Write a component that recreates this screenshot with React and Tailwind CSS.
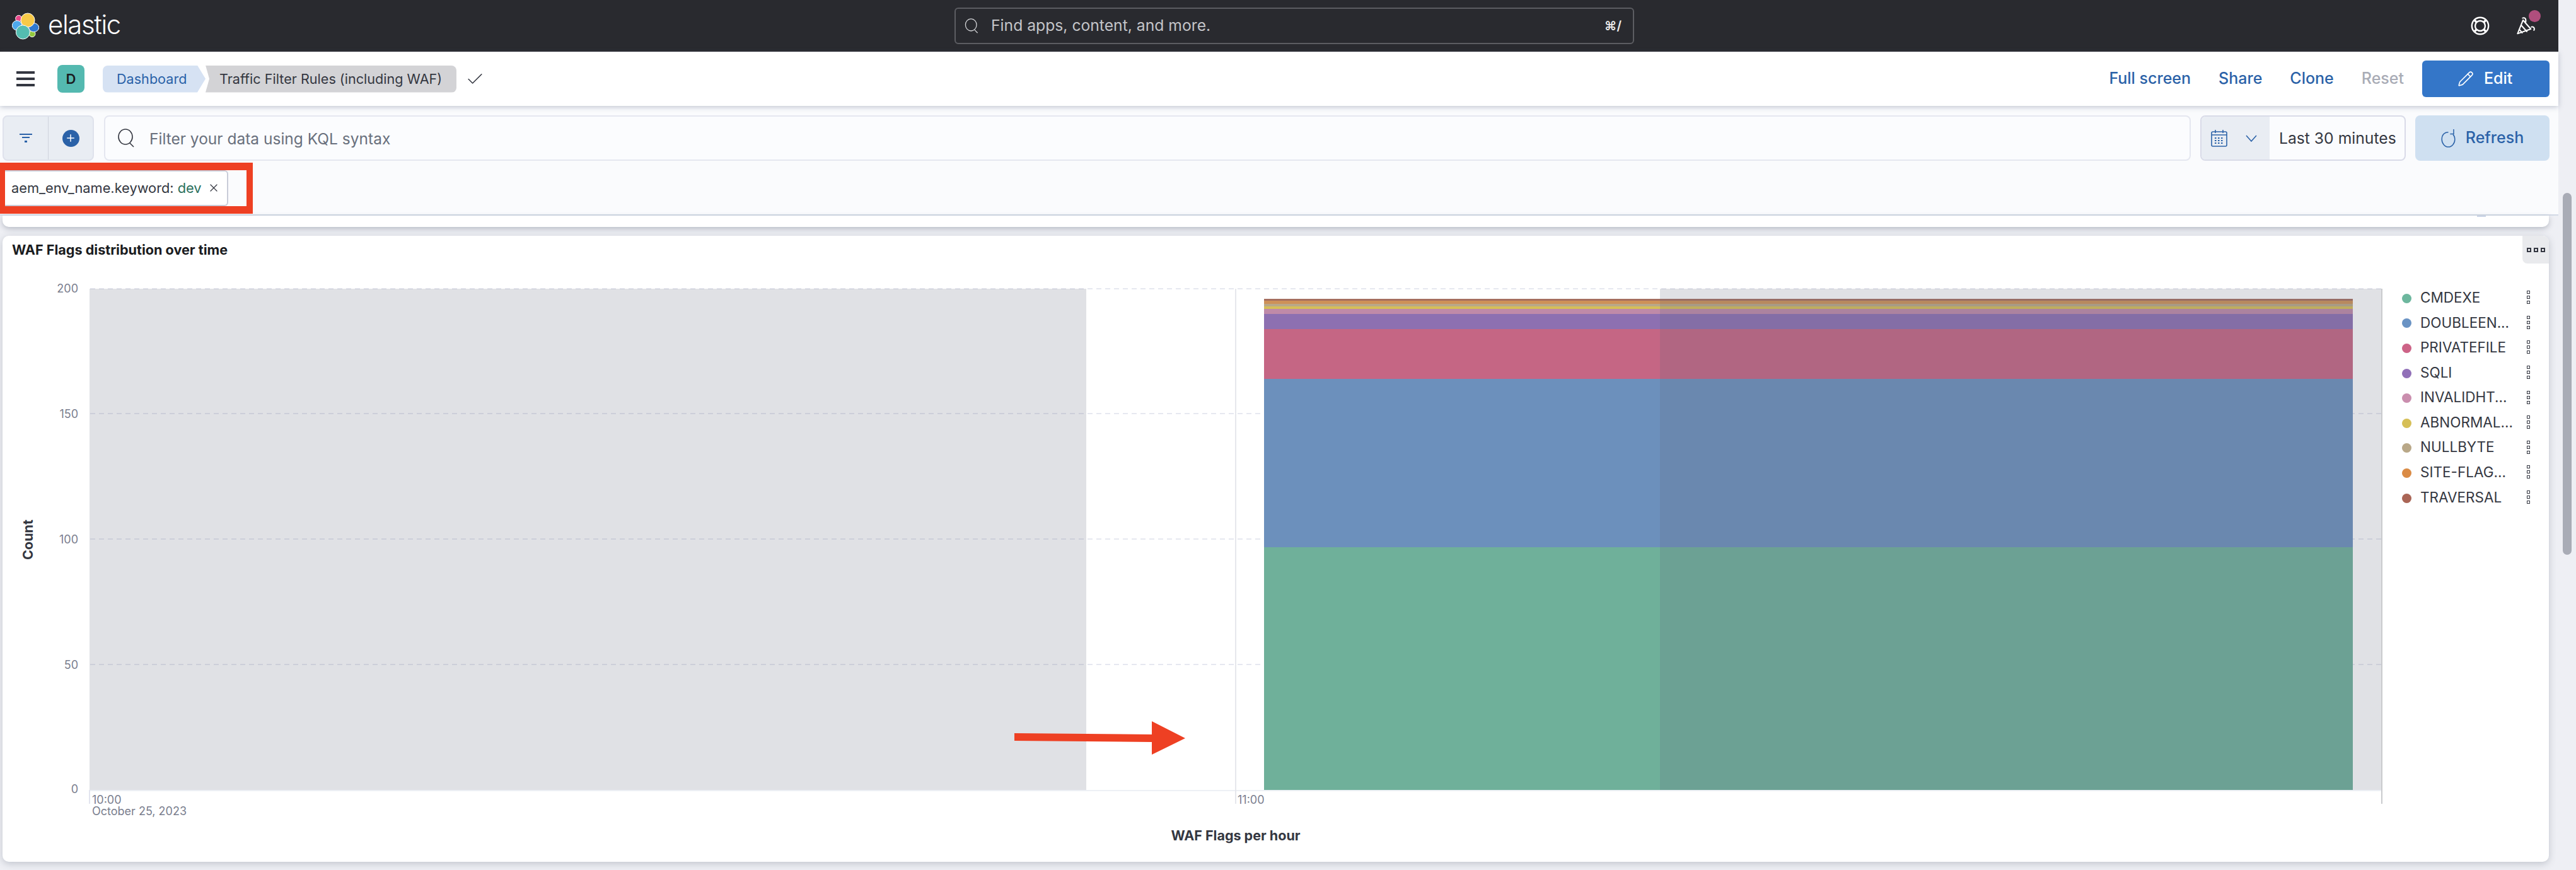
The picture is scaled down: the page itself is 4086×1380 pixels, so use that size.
import { Check, Pencil, Plus, X } from "lucide-react";

const BANDS = [
  { y: 474, h: 3, fill: "#a66f5f" },
  { y: 477, h: 5, fill: "#ce9158" },
  { y: 482, h: 4, fill: "#b9a888" },
  { y: 486, h: 4, fill: "#d6bf57" },
  { y: 490, h: 8, fill: "#bf8aa8" },
  { y: 498, h: 24, fill: "#8d70b1" },
  { y: 522, h: 79, fill: "#c56684" },
  { y: 601, h: 267, fill: "#6c90bc" },
  { y: 868, h: 385, fill: "#6fb09a" },
];

const LEGEND = [
  { label: "CMDEXE", color: "#6db79e" },
  { label: "DOUBLEEN...", color: "#6a93c4" },
  { label: "PRIVATEFILE", color: "#cd6387" },
  { label: "SQLI", color: "#9170b8" },
  { label: "INVALIDHT...", color: "#ca8eae" },
  { label: "ABNORMAL...", color: "#d6bf57" },
  { label: "NULLBYTE", color: "#b9a888" },
  { label: "SITE-FLAG...", color: "#da8b45" },
  { label: "TRAVERSAL", color: "#aa6556" },
];

function SearchGlyph({ className }) {
  return (
    <svg viewBox="0 0 28 30" fill="none" stroke="currentColor" strokeWidth="1.6" className={className}>
      <ellipse cx="13" cy="13" rx="11" ry="12" />
      <path d="M20 23l6 6" />
    </svg>
  );
}

function Logo() {
  return (
    <svg viewBox="0 0 129 127" className="w-[43px] h-[43px]" stroke="#fff" strokeWidth="3">
      <circle cx="32" cy="27" r="15" fill="#e8488b" />
      <circle cx="96" cy="100" r="15" fill="#93c83e" />
      <ellipse cx="24" cy="60" rx="23" ry="23" fill="#4ea9ec" />
      <ellipse cx="104" cy="70" rx="24" ry="21" fill="#2f78cf" />
      <circle cx="75" cy="35" r="33" fill="#f7c948" />
      <circle cx="52" cy="92" r="33" fill="#54bcb0" />
    </svg>
  );
}

function HelpRing() {
  return (
    <svg viewBox="0 0 30 30" className="w-[30px] h-[30px]" fill="none" stroke="#fff" strokeWidth="2.4">
      <circle cx="15" cy="15" r="13.2" />
      <circle cx="15" cy="15" r="8" />
      <path d="M5.7 5.7l3.6 3.6M24.3 5.7l-3.6 3.6M5.7 24.3l3.6-3.6M24.3 24.3l-3.6-3.6" strokeWidth="3.4" />
    </svg>
  );
}

function Cheer() {
  return (
    <svg viewBox="0 0 90 90" className="w-[30px] h-[30px]" fill="none" stroke="#fff" strokeWidth="6" strokeLinejoin="round" strokeLinecap="round">
      <path d="M4 82L30 18L67 60Z" />
      <path d="M21 42L48 72M12 62L26 78" />
      <path d="M28 8c12-4 18 4 14 22" />
      <path d="M70 50c12-2 16 6 12 16" />
    </svg>
  );
}

function Chart() {
  const grid = [458, 656, 855, 1054];
  return (
    <svg viewBox="4 418 3796 949" className="w-[3796px] h-[949px] shrink-0 block">
      {grid.map((y) => (
        <line key={y} x1="143" x2="3778" y1={y} y2={y} stroke="#e6e8f0" strokeWidth="2" strokeDasharray="8 6" />
      ))}
      {BANDS.map((b) => (
        <rect key={b.y} x="2005" y={b.y} width="1727" height={b.h} fill={b.fill} />
      ))}
      <rect x="142" y="458" width="1581" height="795" fill="#64697d" fillOpacity="0.2" />
      <rect x="2633" y="458" width="1145" height="795" fill="#64697d" fillOpacity="0.2" />
      <line x1="143" x2="3778" y1="1254" y2="1254" stroke="#edf0f5" strokeWidth="2" />
      <line x1="142" x2="142" y1="1253" y2="1275" stroke="#e3e5ef" strokeWidth="2" />
      <line x1="1960" x2="1960" y1="458" y2="1275" stroke="#e6e7ec" strokeWidth="2" />
      <line x1="3778" x2="3778" y1="458" y2="1275" stroke="#c9cacd" strokeWidth="2" />
      <g fill="#7a7e8e" fontSize="18" textAnchor="end">
        <text x="124" y="464">200</text>
        <text x="124" y="663">150</text>
        <text x="124" y="862">100</text>
        <text x="124" y="1061">50</text>
        <text x="124" y="1258">0</text>
      </g>
      <g fill="#7a7e8e" fontSize="18">
        <text x="146" y="1275">10:00</text>
        <text x="146" y="1293">October 25, 2023</text>
        <text x="1963" y="1275">11:00</text>
      </g>
      <text x="52" y="856" transform="rotate(-90 52 856)" textAnchor="middle" fill="#343741" fontSize="21.5" fontWeight="700">Count</text>
      <text x="1960" y="1333" textAnchor="middle" fill="#343741" fontSize="21.5" fontWeight="700">WAF Flags per hour</text>
    </svg>
  );
}

export default function App() {
  return (
    <div className="relative flex w-[4086px] h-[1380px] overflow-hidden bg-[#eeeff4] font-[Inter,sans-serif]">
      <div className="flex flex-col w-[4058px] shrink-0">
        {/* global header */}
        <div className="flex items-center justify-between h-[82px] bg-[#292a2f] text-white shrink-0">
          <div className="flex items-center w-[1514px] pl-[19px]">
            <Logo />
            <span className="ml-[14px] text-[42px] leading-none font-light tracking-[-1.4px] -mt-[4px]">elastic</span>
          </div>
          <div className="flex items-center w-[1078px] h-[58px] border-2 border-[#5c5d62] rounded-[6px] pl-[13px] pr-[18px]">
            <SearchGlyph className="w-[24px] h-[24px] text-[#d5d6d9]" />
            <span className="ml-[19px] text-[24.7px] text-[#c3c4c8]">Find apps, content, and more.</span>
            <span className="ml-auto text-[20px] font-semibold text-[#eceded]">⌘/</span>
          </div>
          <div className="flex items-center justify-end flex-1 pr-[36px] gap-[43px]">
            <HelpRing />
            <div className="relative">
              <Cheer />
              <span className="absolute -top-[10px] left-[19px] w-[19px] h-[19px] rounded-full bg-[#b04e7d]" />
            </div>
          </div>
        </div>

        {/* app menu bar */}
        <div className="relative z-10 flex items-center h-[86px] bg-white shrink-0 shadow-[0_2px_8px_rgba(90,100,130,0.35)] pl-[26px] pr-[14px]">
          <div className="flex flex-col gap-[6px] w-[29px]">
            <span className="h-[4px] bg-[#343741]" />
            <span className="h-[4px] bg-[#343741]" />
            <span className="h-[4px] bg-[#343741]" />
          </div>
          <div className="flex items-center justify-center ml-[36px] w-[43px] h-[44px] rounded-[8px] bg-[#54b9b0] text-[22px] font-semibold text-[#1a1c21]">D</div>
          <div className="flex items-center ml-[29px] h-[43px]">
            <span className="flex items-center w-[163px] h-full pl-[22px] rounded-l-[8px] bg-[#d6e2f3] text-[21.6px] text-[#2b62a8] [clip-path:polygon(0_0,150px_0,100%_50%,150px_100%,0_100%)]">Dashboard</span>
            <span className="flex items-center w-[405px] h-full -ml-[7px] pl-[29px] rounded-r-[8px] bg-[#d3d3d6] text-[21.6px] text-[#343741] whitespace-nowrap [clip-path:polygon(0_0,100%_0,100%_100%,0_100%,7px_100%,13px_50%,7px_0)]">Traffic Filter Rules (including WAF)</span>
          </div>
          <Check size={31} strokeWidth={1.2} className="ml-[14px] text-[#343741]" />
          <div className="flex items-center ml-auto text-[25px] font-medium text-[#2b62a8]">
            <span className="mr-[44px]">Full screen</span>
            <span className="mr-[44px]">Share</span>
            <span className="mr-[44px]">Clone</span>
            <span className="mr-[29px] text-[#a9acb6]">Reset</span>
            <span className="flex items-center gap-[16px] w-[202px] h-[58px] pl-[56px] rounded-[6px] bg-[#3476c8] text-white">
              <Pencil size={26} strokeWidth={1.5} />
              Edit
            </span>
          </div>
        </div>

        {/* query bar */}
        <div className="flex flex-col h-[174px] shrink-0 bg-[#fafbfd] border-b-2 border-[#d3dae6]">
          <div className="flex items-center h-[72px] mt-[15px] pl-[4px] pr-[14px]">
            <div className="flex w-[145px] h-full rounded-[8px] border-2 border-[#dfe2ec] bg-[#e9edf3]">
              <div className="flex items-center justify-center w-[71px] border-r border-[#cfd3dd]">
                <svg viewBox="0 0 20 14" className="w-[20px] h-[14px]" fill="#2b62a8">
                  <rect x="0" y="0" width="20" height="2" />
                  <rect x="4" y="5" width="12" height="2" />
                  <rect x="8" y="11" width="4" height="3" />
                </svg>
              </div>
              <div className="flex items-center justify-center flex-1">
                <span className="flex items-center justify-center w-[27px] h-[27px] rounded-full bg-[#2b62a8] text-white">
                  <Plus size={18} strokeWidth={2} />
                </span>
              </div>
            </div>
            <div className="flex items-center flex-1 h-full ml-[16px] rounded-[8px] border-2 border-[#e5e7f0] bg-[#fbfcfe] pl-[19px] text-[24.5px] text-[#69707d]">
              <SearchGlyph className="w-[28px] h-[30px] text-[#343741]" />
              <span className="ml-[23px] pt-[3px]">Filter your data using KQL syntax</span>
            </div>
            <div className="flex w-[326px] h-full ml-[15px] rounded-[8px] border-2 border-[#d9dbe8] bg-[#fbfcfe] overflow-hidden">
              <div className="flex items-center w-[108px] h-full bg-[#e9edf3] pl-[15px] text-[#2b62a8]">
                <svg viewBox="0 0 26 28" className="w-[26px] h-[28px]" fill="none" stroke="currentColor" strokeWidth="1.6">
                  <rect x="1" y="4" width="24" height="23" rx="2" />
                  <path d="M1 9h24M7 1v5M19 1v5" />
                  <path d="M6 14h14M6 18h14M6 22h14" strokeDasharray="2.5 2.5" strokeWidth="2.2" />
                </svg>
                <svg viewBox="0 0 18 11" className="ml-[29px] w-[18px] h-[11px]" fill="none" stroke="currentColor" strokeWidth="1.6">
                  <path d="M1 1l8 9 8-9" />
                </svg>
              </div>
              <span className="flex items-center pl-[15px] pt-[1px] text-[24.7px] text-[#343741] whitespace-nowrap">Last 30 minutes</span>
            </div>
            <div className="flex items-center justify-center gap-[16px] w-[213px] h-full ml-[15px] rounded-[8px] bg-[#cfe0f1] text-[25px] font-medium text-[#2b62a8]">
              <svg viewBox="0 0 24 32" className="w-[23px] h-[30px]" fill="none" stroke="currentColor" strokeWidth="1.6">
                <path d="M12 6C5 6 1 11 1 18s5 13 11 13 11-6 11-13c0-3-1-6-3-8" />
                <path d="M21 1v8h-6" />
              </svg>
              Refresh
            </div>
          </div>
          <div className="flex items-center flex-1 pl-[8px]">
            <span className="flex items-center w-[354px] h-[57px] mt-[1px] rounded-r-[6px] border-2 border-l-0 border-[#c9ccd8] bg-white pl-[10px] text-[21.8px] text-[#343741] whitespace-nowrap">
              aem_env_name.keyword:<span className="ml-[6px] text-[#2a6f5c]">dev</span>
              <X size={20} strokeWidth={1.5} className="ml-[9px]" />
            </span>
          </div>
        </div>

        {/* dashboard panels */}
        <div className="flex flex-col flex-1 pl-[4px] pr-[15px]">
          <div className="relative h-[18px] shrink-0 bg-white rounded-b-[10px] shadow-[0_3px_8px_rgba(60,70,90,0.3)]">
            <span className="absolute top-0 right-[100px] w-[14px] h-[2px] bg-[#c9d3e6]" />
          </div>
          <div className="flex flex-col h-[993px] mt-[14px] bg-white rounded-[10px] shadow-[0_3px_12px_rgba(60,70,90,0.25)] overflow-hidden">
            <div className="flex justify-between h-[44px] shrink-0 pl-[15px]">
              <span className="pt-[9px] text-[21.6px] leading-[26px] font-bold text-[#1a1c21]">WAF Flags distribution over time</span>
              <div className="flex items-center justify-center gap-[4px] w-[42px] h-full rounded-bl-[8px] bg-[#e9eaed]">
                <span className="w-[7px] h-[7px] border-2 border-[#343741]" />
                <span className="w-[7px] h-[7px] border-2 border-[#343741]" />
                <span className="w-[7px] h-[7px] border-2 border-[#343741]" />
              </div>
            </div>
            <div className="flex">
              <Chart />
              <div className="flex flex-col pt-[34px] pl-[10px]">
                {LEGEND.map((item) => (
                  <div key={item.label} className="flex items-center h-[39.6px]">
                    <span className="w-[15px] h-[15px] rounded-full mt-[3px]" style={{ backgroundColor: item.color }} />
                    <span className="w-[169px] ml-[14px] text-[22.5px] text-[#343741] whitespace-nowrap">{item.label}</span>
                    <span className="flex flex-col gap-[3px]">
                      <span className="w-[5px] h-[5px] border border-[#343741]" />
                      <span className="w-[5px] h-[5px] border border-[#343741]" />
                      <span className="w-[5px] h-[5px] border border-[#343741]" />
                    </span>
                  </div>
                ))}
              </div>
            </div>
          </div>
        </div>
      </div>

      {/* scrollbar */}
      <div className="flex-1 pt-[306px] pl-[7px]">
        <div className="w-[14px] h-[574px] rounded-full bg-[#a9acb6]" />
      </div>

      {/* annotations drawn on top of the screenshot */}
      <div className="absolute left-0 top-[258px] w-[401px] h-[81px] border-t-[12px] border-b-[12px] border-l-[8px] border-r-[10px] border-[#ee4023]" />
      <svg viewBox="0 0 272 53" className="absolute left-[1609px] top-[1144px] w-[272px] h-[53px]" fill="#ee4023">
        <path d="M0 19L218 21V0L271 27L218 53V33L0 31Z" />
      </svg>
    </div>
  );
}
